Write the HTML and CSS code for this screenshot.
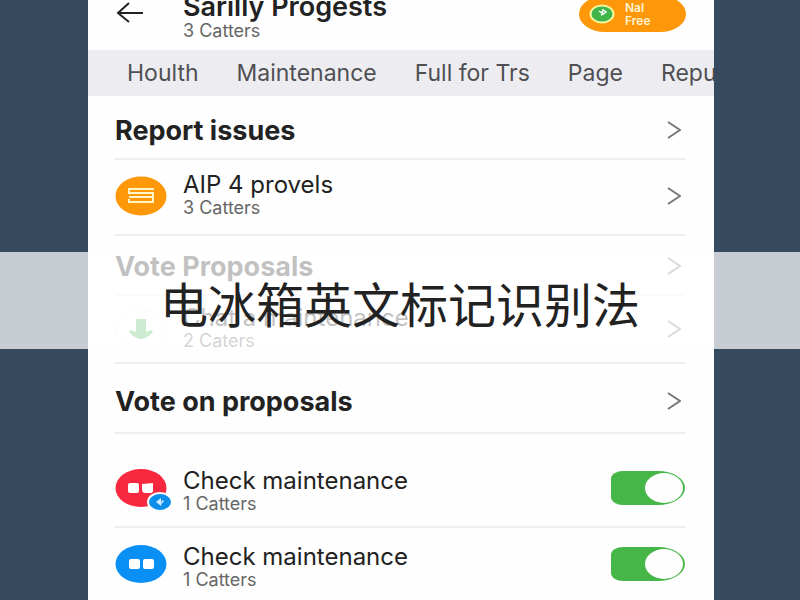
FILE: index.html
```html
<!DOCTYPE html>
<html lang="en">
<head>
    <meta charset="UTF-8">
    <meta name="viewport" content="width=device-width, initial-scale=1.0">
    <title>电冰箱英文标记识别法</title>
    <link rel="stylesheet" href="styles.css">
</head>
<body>
    <main class="app">
        <header class="header">
            <button class="back" aria-label="Back">
                <svg width="28" height="22" viewBox="0 0 28 22"><path d="M13 1 L2 11 L13 20 M2 11 H27" fill="none" stroke="#222" stroke-width="2"/></svg>
            </button>
            <div class="header-text">
                <h1>Sarilly Progests</h1>
                <p class="sub">3 Catters</p>
            </div>
            <button class="pill">
                <svg width="26" height="20" viewBox="0 0 26 20"><ellipse cx="13" cy="10" rx="11.5" ry="8.5" fill="#3fb54a" stroke="#f4f7a0" stroke-width="2"/><path d="M10 7 L13 9 L14 6 L17 8 L14 10 L12 11" fill="none" stroke="#fff" stroke-width="1.5"/></svg>
                <span>Nal<br>Free</span>
            </button>
        </header>

        <nav class="tabs">
            <a href="#">Houlth</a>
            <a href="#">Maintenance</a>
            <a href="#">Full for Trs</a>
            <a href="#">Page</a>
            <a href="#">Repu</a>
        </nav>

        <div class="list">
            <section>
                <h2 class="heading">Report issues
                    <svg class="chevron" viewBox="0 0 14 18"><path d="M1 1 L13 9 L1 17"/></svg>
                </h2>
                <a class="row" href="#">
                    <svg class="icon" viewBox="0 0 52 40"><ellipse cx="26" cy="20" rx="25.5" ry="19.5" fill="#ff9808"/><path d="M39 13 H14 V17 H38 V21 M14 21 H38 V26 H14 V23" fill="none" stroke="#fff6c8" stroke-width="2"/></svg>
                    <div class="text">
                        <p class="name">AIP 4 provels</p>
                        <p class="sub">3 Catters</p>
                    </div>
                    <svg class="chevron" viewBox="0 0 14 18"><path d="M1 1 L13 9 L1 17"/></svg>
                </a>
            </section>

            <section>
                <h2 class="heading">Vote Proposals
                    <svg class="chevron" viewBox="0 0 14 18"><path d="M1 1 L13 9 L1 17"/></svg>
                </h2>
                <a class="row compact" href="#">
                    <svg class="icon" viewBox="0 0 52 40"><ellipse cx="26" cy="20" rx="25" ry="19" fill="#fff" stroke="#eee"/><path d="M21 10 H31 V23 L36 21 L38 23 Q32 30 26 30 Q20 30 14 23 L16 21 L21 23 Z" fill="#4cb85a"/></svg>
                    <div class="text">
                        <p class="name">Chat a maintenance</p>
                        <p class="sub">2 Caters</p>
                    </div>
                    <svg class="chevron" viewBox="0 0 14 18"><path d="M1 1 L13 9 L1 17"/></svg>
                </a>
            </section>

            <section>
                <h2 class="heading last">Vote on proposals
                    <svg class="chevron" viewBox="0 0 14 18"><path d="M1 1 L13 9 L1 17"/></svg>
                </h2>
                <label class="row check">
                    <span class="avatar">
                        <svg class="icon" viewBox="0 0 52 40"><ellipse cx="26" cy="20" rx="25.5" ry="19" fill="#f8283f"/><rect x="13" y="15" width="11" height="10" rx="2" fill="#fff"/><path d="M27 16 L38 15 V23 Q38 25 36 25 H30 Q27 25 27 21 Z" fill="#fff"/></svg>
                        <svg class="badge" viewBox="0 0 26 20"><ellipse cx="13" cy="10" rx="12" ry="9" fill="#0c8fea" stroke="#fff" stroke-width="2"/><path d="M9 10 L14 6 V14 Z M15 8 L17 9 L14 13" fill="#d5efff"/></svg>
                    </span>
                    <span class="text">
                        <span class="name">Check maintenance</span>
                        <span class="sub">1 Catters</span>
                    </span>
                    <input class="toggle" type="checkbox" checked>
                </label>
                <label class="row check">
                    <span class="avatar">
                        <svg class="icon" viewBox="0 0 52 40"><ellipse cx="26" cy="20" rx="25.5" ry="19" fill="#0a90f5"/><rect x="14" y="15" width="11" height="10" rx="2" fill="#fff"/><rect x="28" y="15" width="11" height="10" rx="2" fill="#fff"/></svg>
                    </span>
                    <span class="text">
                        <span class="name">Check maintenance</span>
                        <span class="sub">1 Catters</span>
                    </span>
                    <input class="toggle" type="checkbox" checked>
                </label>
            </section>
        </div>
    </main>

    <div class="banner" lang="zh-CN">电冰箱英文标记识别法</div>
</body>
</html>
```
FILE: styles.css
```css
* {
    box-sizing: border-box;
}
body {
    margin: 0;
    height: 100vh;
    overflow: hidden;
    position: relative;
    background-color: #364b60;
    font-family: Inter, "Liberation Sans", sans-serif;
    color: #222;
}
h1, h2, p {
    margin: 0;
}
a {
    color: inherit;
    text-decoration: none;
}
button {
    border: none;
    padding: 0;
    cursor: pointer;
}
.app {
    min-height: 100%;
    margin: 0 86px 0 88px;
    background-color: #fefefe;
    overflow: hidden;
}
.header {
    height: 50px;
    padding: 0 28px;
    display: flex;
    align-items: flex-end;
}
.back {
    width: 67px;
    height: 50px;
    padding-bottom: 22px;
    background: none;
    text-align: left;
}
.header-text {
    flex: 1;
    padding-bottom: 8px;
}
h1 {
    font-size: 27px;
    line-height: 26px;
    font-weight: 600;
}
.sub {
    display: block;
    font-size: 18px;
    line-height: 22px;
    color: #666;
}
.pill {
    display: flex;
    align-items: center;
    gap: 10px;
    width: 107px;
    height: 36px;
    margin-bottom: 18px;
    padding-left: 10px;
    border-radius: 26px / 18px;
    background-color: #ff970a;
    color: #fff3d0;
    font-family: inherit;
    font-size: 12px;
    line-height: 13px;
    font-weight: 600;
    text-align: left;
}
.tabs {
    display: flex;
    align-items: center;
    gap: 38px;
    height: 46px;
    padding-left: 39px;
    background-color: #ededf1;
    font-size: 23px;
    color: #505054;
    white-space: nowrap;
    overflow: hidden;
}
.list {
    padding: 4px 29px 0 27px;
}
.heading {
    display: flex;
    align-items: center;
    justify-content: space-between;
    height: 60px;
    padding-top: 2px;
    border-bottom: 2px solid #eee;
    font-size: 27px;
    font-weight: 700;
}
.heading.last {
    height: 70px;
    padding-top: 6px;
    margin-bottom: 18px;
}
.row {
    display: flex;
    align-items: center;
    gap: 16px;
    height: 76px;
    padding-bottom: 2px;
    border-bottom: 2px solid #eee;
}
.row.compact {
    height: 68px;
    padding-bottom: 0;
}
.icon {
    display: block;
    width: 52px;
    height: 40px;
}
.text {
    flex: 1;
}
.check .text {
    padding-top: 8px;
}
.name {
    display: block;
    font-size: 24px;
    line-height: 24px;
}
.chevron {
    width: 14px;
    height: 18px;
    margin-right: 4px;
    fill: none;
    stroke: #777;
    stroke-width: 2;
}
.avatar {
    position: relative;
}
.badge {
    position: absolute;
    right: -6px;
    bottom: -4px;
    width: 26px;
    height: 20px;
}
.toggle {
    appearance: none;
    display: flex;
    justify-content: flex-end;
    width: 74px;
    height: 34px;
    margin: 0;
    padding: 2px;
    border-radius: 12px 27px 27px 12px / 8px 17px 17px 8px;
    background-color: #46b648;
}
.toggle::before {
    content: "";
    width: 38px;
    height: 30px;
    border-radius: 50%;
    background-color: #fefefe;
}
.banner {
    position: absolute;
    top: 252px;
    left: 0;
    right: 0;
    padding-top: 6px;
    padding-bottom: 2px;
    background-color: rgba(255, 255, 255, 0.72);
    color: #222;
    font-family: "Noto Sans CJK SC", sans-serif;
    font-size: 48px;
    line-height: 89px;
    text-align: center;
}
```
